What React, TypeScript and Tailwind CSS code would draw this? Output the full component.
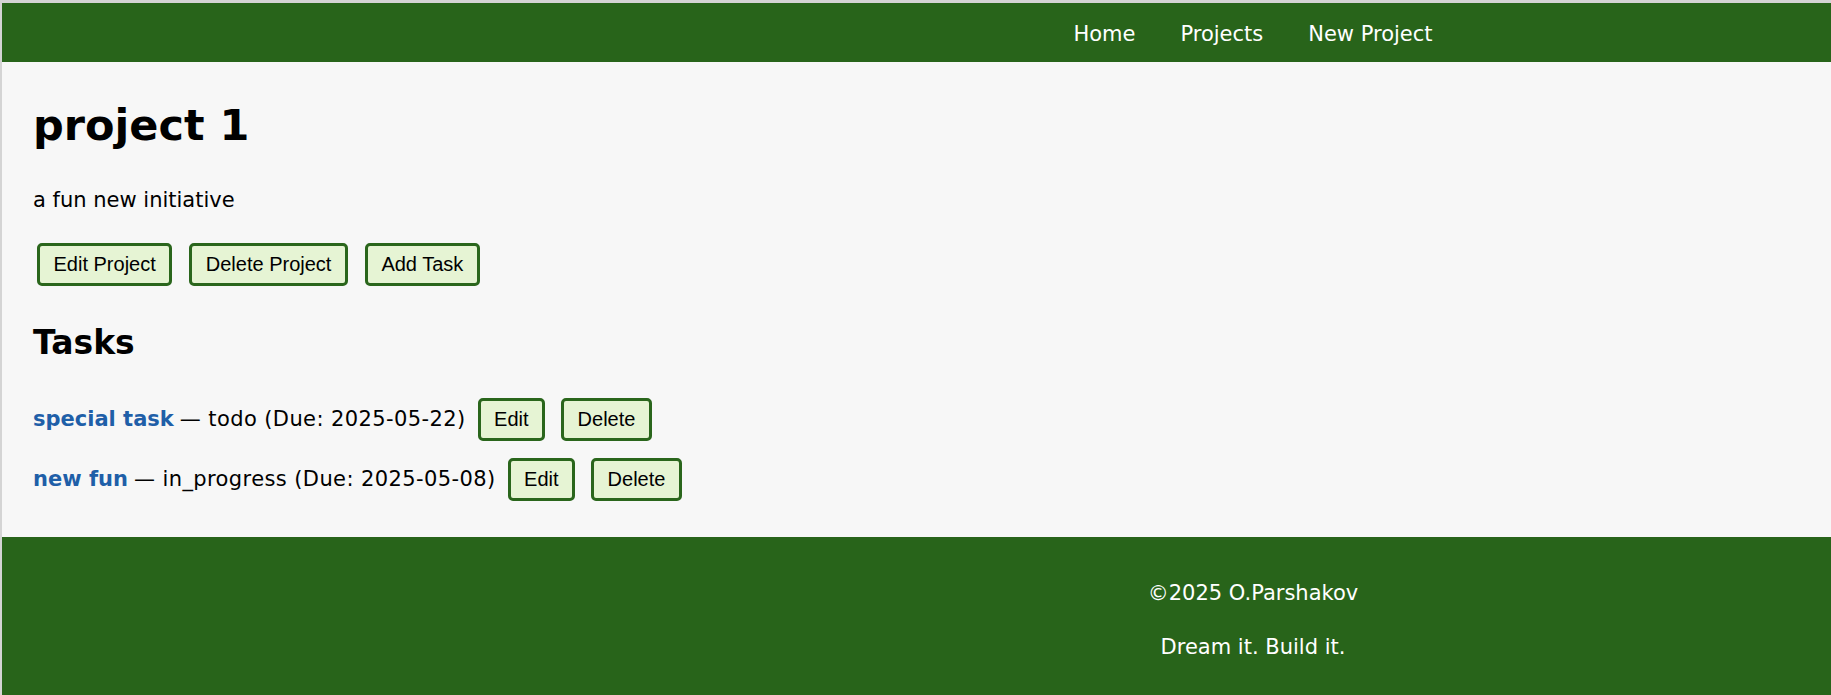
import React from 'react';

interface Task {
  title: string;
  status: string;
  due: string;
}

const tasks: Task[] = [
  { title: 'special task', status: 'todo', due: '2025-05-22' },
  { title: 'new fun', status: 'in_progress', due: '2025-05-08' },
];

const ActionButton: React.FC<{ label: string }> = ({ label }) => (
  <button
    type="button"
    className="h-[43px] px-[13.5px] pb-[2px] rounded-[5px] border-[3px] border-[#2a661c] bg-[#e6f4d4] text-black text-[20px] font-['Liberation_Sans',Arial,sans-serif] leading-none"
  >
    {label}
  </button>
);

export default function App() {
  return (
    <div className="min-h-screen flex flex-col border-t-[3px] border-l-2 border-[#d4d4d4] bg-[#f7f7f7] font-['DejaVu_Sans',Verdana,sans-serif] text-black">
      <header className="h-[59px] bg-[#28641a] flex items-center justify-center gap-[45px] pl-[673px] pt-[4px] text-white text-[21px]">
        <a href="#">Home</a>
        <a href="#">Projects</a>
        <a href="#">New Project</a>
      </header>

      <main className="pl-[31px] pt-[38px] pb-[36px]">
        <h1 className="text-[43px] font-bold leading-[50px]">project 1</h1>
        <p className="mt-[37px] text-[21px] leading-[26px]">a fun new initiative</p>
        <div className="mt-[30px] flex gap-[17px] pl-[4px]">
          <ActionButton label="Edit Project" />
          <ActionButton label="Delete Project" />
          <ActionButton label="Add Task" />
        </div>

        <h2 className="mt-[38px] text-[33px] font-bold leading-[38px]">Tasks</h2>
        <ul className="mt-[36px] flex flex-col gap-[17px]">
          {tasks.map((task) => (
            <li key={task.title} className="flex items-center text-[21px]">
              <a href="#" className="font-bold text-[#1f5fa8]">
                {task.title}
              </a>
              <span className="ml-[6px] tracking-[0.4px]">
                — {task.status} (Due: {task.due})
              </span>
              <div className="ml-[12px] flex gap-4">
                <ActionButton label="Edit" />
                <ActionButton label="Delete" />
              </div>
            </li>
          ))}
        </ul>
      </main>

      <footer className="flex-1 bg-[#28641a] text-white text-[21px] leading-[26px] pl-[673px] pt-[43px] pb-[35px] flex flex-col items-center gap-[28px]">
        <p>©2025 O.Parshakov</p>
        <p>Dream it. Build it.</p>
      </footer>
    </div>
  );
}
